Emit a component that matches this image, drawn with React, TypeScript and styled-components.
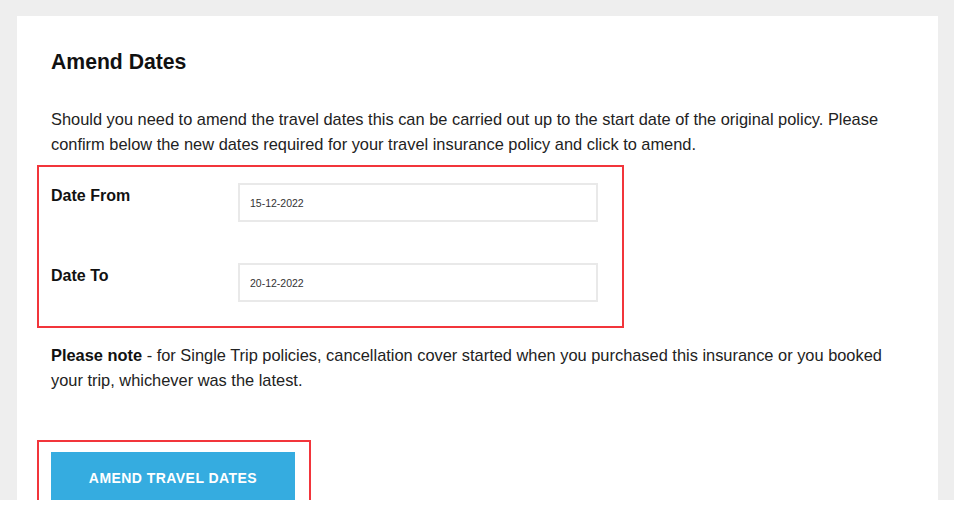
import React from "react";
import styled, { createGlobalStyle } from "styled-components";

const GlobalStyle = createGlobalStyle`
  html, body {
    margin: 0;
    padding: 0;
    background: #ffffff;
  }
  body {
    font-family: "Liberation Sans", Arial, sans-serif;
    color: #222222;
  }
  * { box-sizing: border-box; }
`;

const Page = styled.div`
  height: 500px;
  background: #eeeeee;
  padding: 16px 16px 0 17px;
`;

const Card = styled.section`
  height: 100%;
  background: #ffffff;
  padding: 34px 34px 0 34px;
`;

const Title = styled.h2`
  margin: 0;
  font-size: 21.2px;
  line-height: 24px;
  font-weight: 700;
  color: #111111;
`;

const Text = styled.p<{ $top: number }>`
  margin: ${(p) => p.$top}px 0 0 0;
  font-size: 16.4px;
  line-height: 25px;
  color: #222222;
`;

const Highlight = styled.div<{ $top: number; $pad: string }>`
  margin: ${(p) => p.$top}px 0 0 -14px;
  border: 2px solid #f2353b;
  padding: ${(p) => p.$pad};
  width: fit-content;
`;

const Form = styled.div`
  display: flex;
  flex-direction: column;
  gap: 41px;
`;

const FieldRow = styled.label`
  display: flex;
  align-items: flex-start;
`;

const FieldLabel = styled.span`
  width: 187px;
  padding-top: 3px;
  font-size: 16px;
  line-height: 20px;
  font-weight: 700;
  color: #111111;
`;

const DateInput = styled.input`
  width: 360px;
  height: 39px;
  border: 2px solid #e9e9e9;
  padding: 0 10px;
  font-family: "Liberation Sans", Arial, sans-serif;
  font-size: 10.5px;
  color: #333333;
  background: #ffffff;
  outline: none;
`;

const Strong = styled.strong`
  font-weight: 700;
  color: #111111;
`;

const Button = styled.button`
  display: block;
  width: 244px;
  height: 49px;
  padding: 2px 0 0 0;
  border: none;
  background: #35ace0;
  color: #ffffff;
  font-family: "Liberation Sans", Arial, sans-serif;
  font-size: 14px;
  font-weight: 700;
  letter-spacing: 0.45px;
  text-transform: uppercase;
  cursor: pointer;
`;

export default function App() {
  return (
    <>
      <GlobalStyle />
      <Page>
        <Card>
          <Title>Amend Dates</Title>
          <Text $top={33}>
            Should you need to amend the travel dates this can be carried out up to the start date of
            the original policy. Please confirm below the new dates required for your travel
            insurance policy and click to amend.
          </Text>
          <Highlight $top={8} $pad="16px 24px 24px 12px">
            <Form>
              <FieldRow>
                <FieldLabel>Date From</FieldLabel>
                <DateInput defaultValue="15-12-2022" />
              </FieldRow>
              <FieldRow>
                <FieldLabel>Date To</FieldLabel>
                <DateInput defaultValue="20-12-2022" />
              </FieldRow>
            </Form>
          </Highlight>
          <Text $top={15}>
            <Strong>Please note</Strong> - for Single Trip policies, cancellation cover started when
            you purchased this insurance or you booked your trip, whichever was the latest.
          </Text>
          <Highlight $top={47} $pad="10px 14px 14px 12px">
            <Button>Amend Travel Dates</Button>
          </Highlight>
        </Card>
      </Page>
    </>
  );
}
